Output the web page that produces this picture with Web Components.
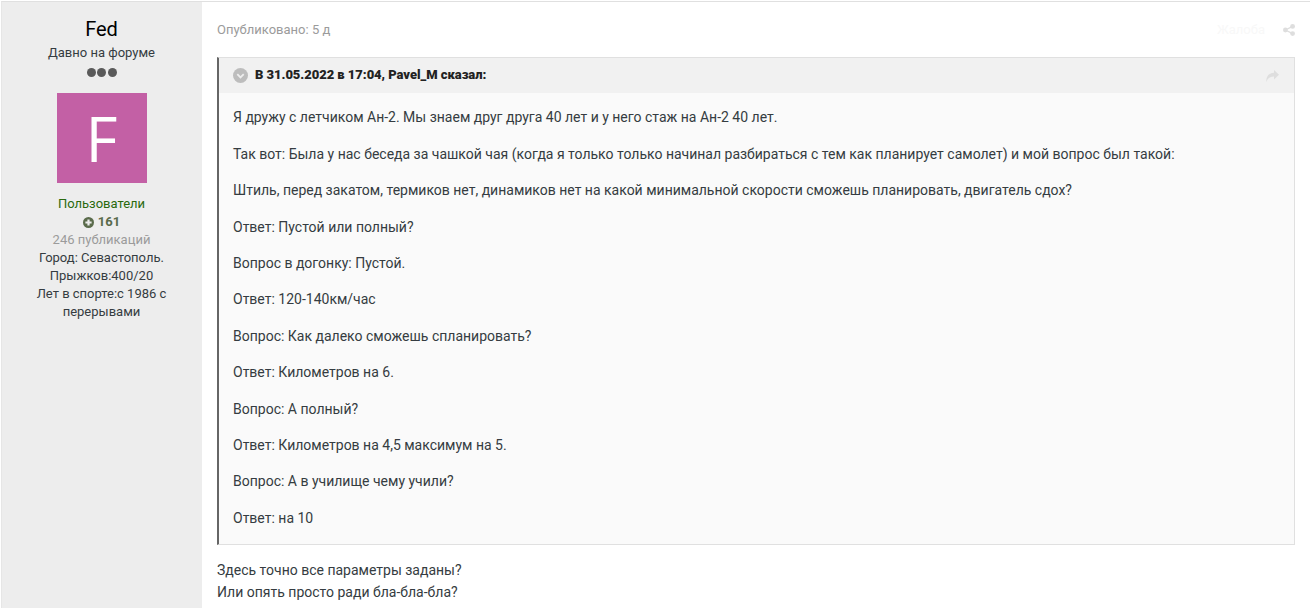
<!DOCTYPE html>
<html lang="ru"><head><meta charset="utf-8"><title>Fed</title>
<style>
html,body{margin:0;padding:0;background:#fff;overflow:hidden;height:608px}
body{font-family:Roboto,"Liberation Sans",sans-serif;color:#353c41}
</style></head><body>
<forum-post>
  <post-author slot="author" name="Fed" rank="Давно на форуме" group="Пользователи" rep="161" posts="246 публикаций">
    <div>Город: Севастополь.</div>
    <div>Прыжков:400/20</div>
    <div>Лет в спорте:с 1986 с перерывами</div>
  </post-author>
  <post-meta slot="meta" when="Опубликовано: 5 д"></post-meta>
  <post-quote slot="body" cite="В 31.05.2022 в 17:04, Pavel_M сказал:">
    <p>Я дружу с летчиком Ан-2. Мы знаем друг друга 40 лет и у него стаж на Ан-2 40 лет.</p>
    <p>Так вот: Была у нас беседа за чашкой чая (когда я только только начинал разбираться с тем как планирует самолет) и мой вопрос был такой:</p>
    <p>Штиль, перед закатом, термиков нет, динамиков нет на какой минимальной скорости сможешь планировать, двигатель сдох?</p>
    <p>Ответ: Пустой или полный?</p>
    <p>Вопрос в догонку: Пустой.</p>
    <p>Ответ: 120-140км/час</p>
    <p>Вопрос: Как далеко сможешь спланировать?</p>
    <p>Ответ: Километров на 6.</p>
    <p>Вопрос: А полный?</p>
    <p>Ответ: Километров на 4,5 максимум на 5.</p>
    <p>Вопрос: А в училище чему учили?</p>
    <p>Ответ: на 10</p>
  </post-quote>
  <post-text slot="body">
    <div>Здесь точно все параметры заданы?</div>
    <div>Или опять просто ради бла-бла-бла?</div>
  </post-text>
</forum-post>
<script>
function def(name, html, attrs){
  customElements.define(name, class extends HTMLElement{
    constructor(){super();this.attachShadow({mode:'open'});}
    connectedCallback(){
      let h=html;
      (attrs||[]).forEach(a=>{h=h.split('{{'+a+'}}').join(this.getAttribute(a)||'');});
      this.shadowRoot.innerHTML=h;
    }
  });
}
def('forum-post',`<style>
:host{display:grid;grid-template-columns:200px 1fr;height:607px;box-sizing:border-box;border-top:1px solid #e0e0e0;border-left:1px solid #e6e6e6;margin:1px 0 0 1px;overflow:hidden;background:#fff}
.side{background:#ededed;display:block}
.main{padding:0 15px;min-width:0}
</style><div class="side"><slot name="author"></slot></div><div class="main"><slot name="meta"></slot><slot name="body"></slot></div>`);
def('post-author',`<style>
:host{display:block;text-align:center;padding:15px 16px 0 15px;font-size:13px;line-height:18px;color:#353c41}
.name{font-size:20px;line-height:24px;color:#000;font-weight:400}
.rank{margin-top:3px}
.pips{display:flex;justify-content:center;margin-top:3px;height:14px;align-items:center}
.pips i{width:9px;height:9px;border-radius:50%;background:#5a5a5a;display:block;margin:0 .75px}
.av{width:90px;height:90px;background:#c360a5;color:#fff;font-size:62px;line-height:90px;margin:14px auto 12px;display:flex;align-items:center;justify-content:center;font-family:"Open Sans",Roboto,sans-serif}
.group{color:#2a6a0e}
.rep{color:#5a6b4b;font-weight:700;display:flex;justify-content:center;align-items:center;gap:4px}
.posts{color:#9b9b9b}
svg{display:block}
</style>
<div class="name">{{name}}</div>
<div class="rank">{{rank}}</div>
<div class="pips"><i></i><i></i><i></i></div>
<div class="av">F</div>
<div class="group">{{group}}</div>
<div class="rep"><svg width="11" height="11" viewBox="0 0 12 12"><circle cx="6" cy="6" r="6" fill="#5a6b4b"/><path d="M6 2.6v6.8M2.6 6h6.8" stroke="#ededed" stroke-width="2.4"/></svg><span>{{rep}}</span></div>
<div class="posts">{{posts}}</div>
<slot></slot>`,['name','rank','group','rep','posts']);
def('post-meta',`<style>
:host{display:flex;justify-content:space-between;align-items:center;height:55px;font-size:13px;color:#9b9b9b}
.r{display:flex;align-items:center;gap:18px;color:#f8f8f8}
svg{display:block}
</style><span>{{when}}</span><span class="r"><span>Жалоба</span><svg width="12" height="12" viewBox="0 0 12 12" fill="#dedede"><circle cx="2.4" cy="6" r="2.4"/><circle cx="9.6" cy="2.4" r="2.4"/><circle cx="9.6" cy="9.6" r="2.4"/><path d="M2.4 6L9.6 2.4M2.4 6l7.2 3.6" stroke="#dedede" stroke-width="1.3"/></svg></span>`,['when']);
def('post-quote',`<style>
:host{display:block;box-sizing:border-box;background:#fafafa;border:1px solid #e0e0e0;border-left:2px solid #666;font-size:14px;line-height:22.4px;color:#353c41;height:488px}
.head{display:flex;align-items:center;height:35px;background:#f1f1f1;padding:0 15px 0 14px;font-size:13px;font-weight:700;color:#222;gap:7px;letter-spacing:-.05px}
.head b{flex:1}
.body{padding:13.3px 14px 0}
::slotted(p){margin:0 0 14px}
svg{display:block}
</style><div class="head"><svg width="15" height="15" viewBox="0 0 15 15"><circle cx="7.5" cy="7.5" r="7.5" fill="#bdbdbd"/><path d="M4.3 6.2l3.2 3.2 3.2-3.2" fill="none" stroke="#eee" stroke-width="1.8"/></svg><b>{{cite}}</b><svg width="13" height="12" viewBox="0 0 13 12"><path d="M8 0l5 4.7L8 9.4V6.6C4.4 6.6 1.8 7.8 .3 12 0 6.6 3 3 8 2.8z" fill="#dedede"/></svg></div><div class="body"><slot></slot></div>`,['cite']);
def('post-text',`<style>
:host{display:block;font-size:14px;line-height:22.4px;color:#353c41;margin-top:14px}
</style><slot></slot>`);
</script>
</body></html>
